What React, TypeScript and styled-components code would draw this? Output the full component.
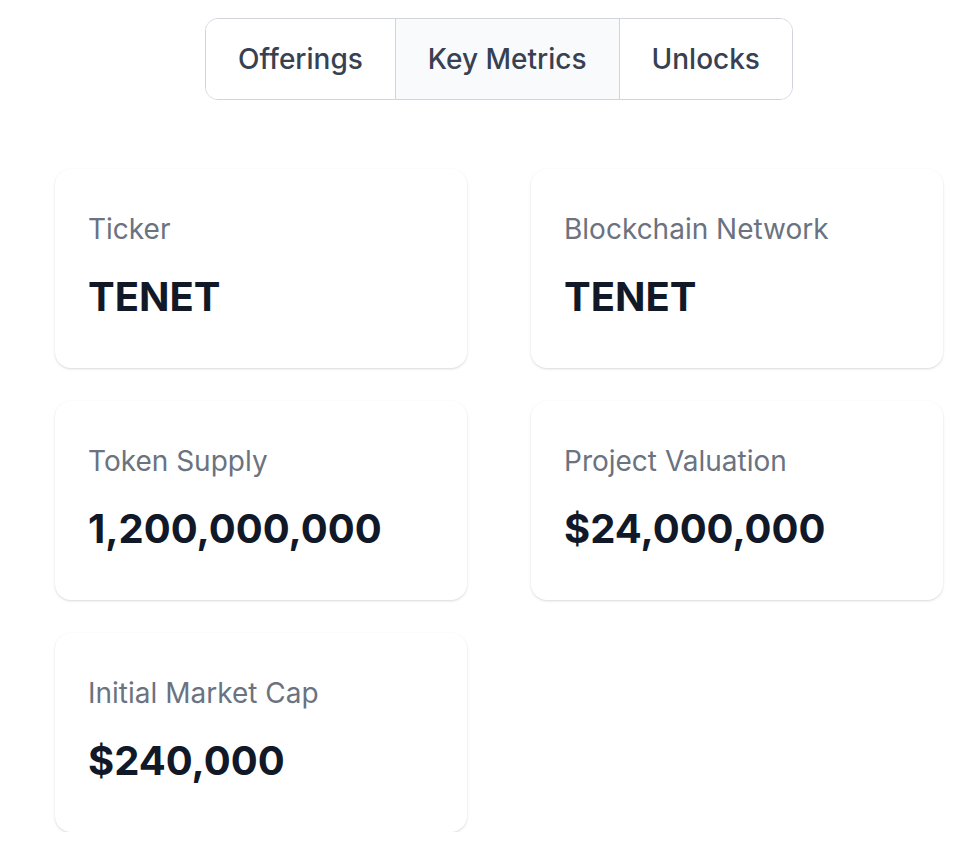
import React, { useState } from "react";
import styled, { createGlobalStyle } from "styled-components";

const GlobalStyle = createGlobalStyle`
  * { box-sizing: border-box; }
  body {
    margin: 0;
    background: #ffffff;
    font-family: Inter, "Noto Sans", sans-serif;
  }
`;

const metrics = [
  { label: "Ticker", value: "TENET" },
  { label: "Blockchain Network", value: "TENET" },
  { label: "Token Supply", value: "1,200,000,000" },
  { label: "Project Valuation", value: "$24,000,000" },
  { label: "Initial Market Cap", value: "$240,000" },
];

const tabs = ["Offerings", "Key Metrics", "Unlocks"];

export default function App() {
  const [active, setActive] = useState(1);

  return (
    <Page>
      <GlobalStyle />
      <TabGroup>
        {tabs.map((t, i) => (
          <Tab key={t} active={i === active} onClick={() => setActive(i)}>
            {t}
          </Tab>
        ))}
      </TabGroup>
      <Grid>
        {metrics.map((m) => (
          <Card key={m.label}>
            <Label>{m.label}</Label>
            <Value>{m.value}</Value>
          </Card>
        ))}
      </Grid>
    </Page>
  );
}

const Page = styled.div`
  width: 888px;
  margin-left: 55px;
  padding-top: 18px;
  display: flex;
  flex-direction: column;
  align-items: center;
`;

const TabGroup = styled.div`
  display: flex;
  border: 1px solid #d1d5db;
  border-radius: 13px;
  overflow: hidden;
  margin-bottom: 69px;
`;

const Tab = styled.button<{ active: boolean }>`
  font-family: Inter, "Noto Sans", sans-serif;
  font-size: 28px;
  font-weight: 500;
  line-height: 40px;
  color: #374151;
  padding: 20px 32px;
  border: none;
  background: ${({ active }) => (active ? "#f9fafb" : "#ffffff")};
  cursor: pointer;
  & + & {
    border-left: 1px solid #d1d5db;
  }
`;

const Grid = styled.div`
  width: 100%;
  display: grid;
  grid-template-columns: 1fr 1fr;
  column-gap: 64px;
  row-gap: 33px;
`;

const Card = styled.div`
  background: #ffffff;
  border-radius: 16px;
  padding: 39px 33px 41px;
  box-shadow: 0 1px 3px rgba(0, 0, 0, 0.1), 0 1px 2px rgba(0, 0, 0, 0.06);
`;

const Label = styled.div`
  font-size: 28px;
  line-height: 42px;
  color: #6b7280;
  margin-bottom: 17px;
`;

const Value = styled.div`
  font-size: 40px;
  line-height: 60px;
  font-weight: 700;
  color: #111827;
`;
